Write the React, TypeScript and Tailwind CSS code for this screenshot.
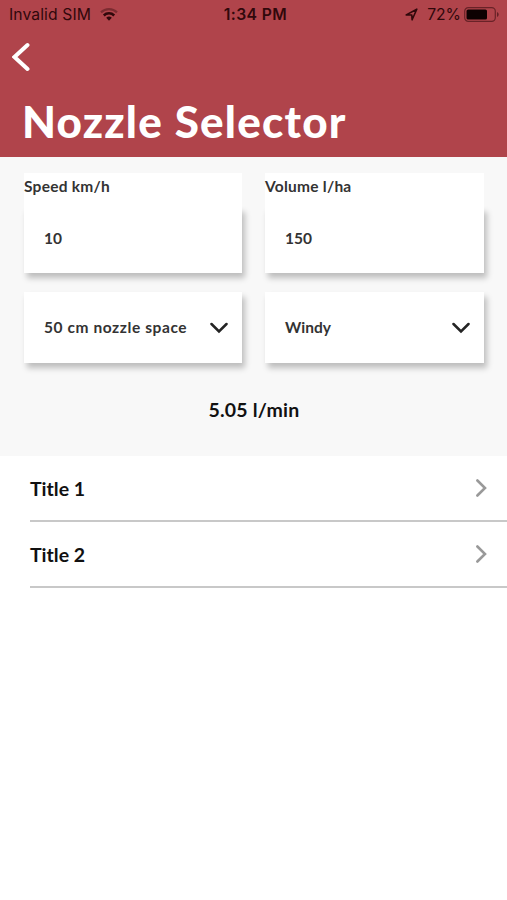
const fieldShadow = 'shadow-[3px_5px_6px_rgba(0,0,0,0.24)]';

function StatusBar() {
  return (
    <div className="flex h-[29px] items-center justify-between pl-[9px] pr-[7px] font-['Inter',sans-serif] font-normal text-[#30080b]">
      <div className="flex w-[180px] items-center gap-[9px]">
        <span className="whitespace-nowrap text-[15.7px] leading-none tracking-[0.1px]">Invalid SIM</span>
        <svg className="h-[13px] w-[18px]" viewBox="0 0 18 13" fill="none">
          <path d="M1 4.4a11.5 11.5 0 0 1 16 0" stroke="currentColor" strokeWidth="2.2" opacity=".4" />
          <path d="M3.8 7.5a7.4 7.4 0 0 1 10.4 0" stroke="currentColor" strokeWidth="2.5" />
          <path d="M6.2 9.8a4 4 0 0 1 5.6 0L9 12.7z" fill="currentColor" />
        </svg>
      </div>
      <span className="pl-[2px] text-[15.7px] font-semibold leading-none tracking-[0.4px]">1:34 PM</span>
      <div className="flex w-[180px] items-center justify-end">
        <svg className="mr-[9px] h-[13px] w-[13px]" viewBox="0 0 13 13" fill="none">
          <path
            d="M1.2 6.9 11.8 1.2 7.1 11.8 6.8 7z"
            stroke="currentColor"
            strokeWidth="1.6"
            strokeLinejoin="round"
          />
        </svg>
        <span className="mr-[3px] text-[15.7px] leading-none">72%</span>
        <svg className="h-[15px] w-[36px]" viewBox="0 0 36 15" fill="none">
          <rect x=".7" y=".7" width="30.6" height="13.6" rx="3.6" stroke="currentColor" strokeWidth="1.2" opacity=".55" />
          <rect x="2.5" y="2.5" width="20.5" height="10" rx="1.6" fill="#0d0102" />
          <path d="M33 5v5c1-.4 1.7-1.4 1.7-2.5S34 5.4 33 5z" fill="currentColor" opacity=".6" />
        </svg>
      </div>
    </div>
  );
}

function InputField({ label, value }: { label: string; value: string }) {
  return (
    <label className="flex flex-col">
      <span className="relative z-10 h-[34px] bg-white pt-[4px] text-[15.5px] leading-[18px] tracking-[0.25px]">
        {label}
      </span>
      <span className={`flex h-[66px] items-center bg-white pl-5 text-[15.5px] leading-[20px] ${fieldShadow}`}>
        <span className="pb-[4px]">{value}</span>
      </span>
    </label>
  );
}

function SelectField({ value, textClass }: { value: string; textClass?: string }) {
  return (
    <button
      className={`flex h-[71px] items-center justify-between bg-white pl-5 pr-[14px] text-[15.5px] ${fieldShadow}`}
    >
      <span className={textClass}>{value}</span>
      <svg className="h-[12px] w-[18px]" viewBox="0 0 18 12" fill="none">
        <path d="M1.5 2 9 9.500 16.5 2" stroke="#242424" strokeWidth="2.5" strokeLinecap="round" />
      </svg>
    </button>
  );
}

function ListRow({ title }: { title: string }) {
  return (
    <li className="ml-[30px] flex h-[66px] items-center justify-between border-b-2 border-[#c8c8c8] pr-[20px]">
      <span className="pt-px text-[19.5px] text-[#111]">{title}</span>
      <svg className="h-[18px] w-[11px]" viewBox="0 0 11 18" fill="none">
        <path d="M1.4 1.5 9 9l-7.6 7.5" stroke="#999" strokeWidth="2.6" strokeLinecap="round" />
      </svg>
    </li>
  );
}

export default function App() {
  return (
    <div className="min-h-screen w-full bg-white font-['Lato','Liberation_Sans',sans-serif] font-bold text-[#333]">
      <header className="h-[157px] bg-[#b0444b]">
        <StatusBar />
        <button className="ml-[12px] mt-[13px] block" aria-label="Back">
          <svg className="h-[30px] w-[18px]" viewBox="0 0 18 30" fill="none">
            <path d="M15.5 3 2.5 15 15.5 27" stroke="#fff" strokeWidth="4" strokeLinecap="round" />
          </svg>
        </button>
        <h1 className="ml-[22px] mt-[22px] text-[44px] font-black leading-[54px] tracking-[1.2px] text-white">
          Nozzle Selector
        </h1>
      </header>

      <section className="h-[299px] bg-[#f8f8f8] pl-6 pr-[23px] pt-4">
        <div className="grid grid-cols-[218px_219px] gap-x-[23px] gap-y-[19px]">
          <InputField label="Speed km/h" value="10" />
          <InputField label="Volume l/ha" value="150" />
          <SelectField value="50 cm nozzle space" textClass="tracking-[0.58px]" />
          <SelectField value="Windy" />
        </div>
        <p className="mt-[33px] text-center text-[19.5px] leading-[28px] tracking-[0.2px] text-[#111]">5.05 l/min</p>
      </section>

      <ul>
        <ListRow title="Title 1" />
        <ListRow title="Title 2" />
      </ul>
    </div>
  );
}
